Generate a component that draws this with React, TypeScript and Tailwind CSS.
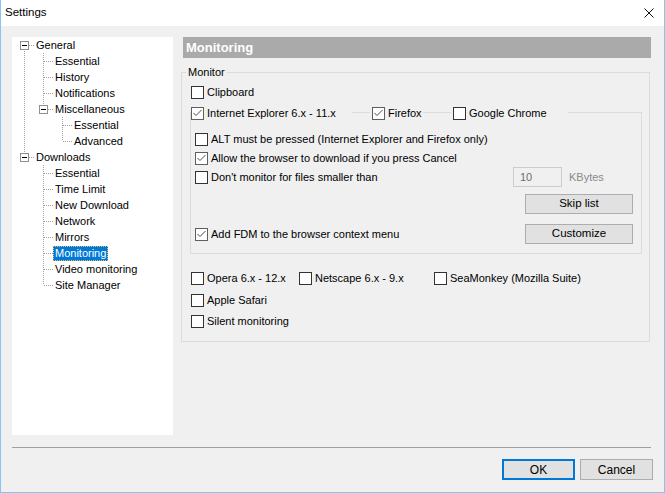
import React from "react";

type TreeNode = { label: string; children?: TreeNode[]; selected?: boolean };

const treeData: TreeNode[] = [
  {
    label: "General",
    children: [
      { label: "Essential" },
      { label: "History" },
      { label: "Notifications" },
      {
        label: "Miscellaneous",
        children: [{ label: "Essential" }, { label: "Advanced" }],
      },
    ],
  },
  {
    label: "Downloads",
    children: [
      { label: "Essential" },
      { label: "Time Limit" },
      { label: "New Download" },
      { label: "Network" },
      { label: "Mirrors" },
      { label: "Monitoring", selected: true },
      { label: "Video monitoring" },
      { label: "Site Manager" },
    ],
  },
];

type FlatRow = {
  label: string;
  guides: boolean[];
  top: boolean;
  bottom: boolean;
  expander: boolean;
  selected?: boolean;
};

const flatten = (nodes: TreeNode[], guides: boolean[], isRoot: boolean): FlatRow[] => {
  const rows: FlatRow[] = [];
  nodes.forEach((node, idx) => {
    const isLast = idx === nodes.length - 1;
    rows.push({
      label: node.label,
      guides,
      top: !(isRoot && idx === 0),
      bottom: !isLast,
      expander: !!node.children,
      selected: node.selected,
    });
    if (node.children) {
      rows.push(...flatten(node.children, [...guides, !isLast], false));
    }
  });
  return rows;
};

const DOT = "#a0a0a0";

// one 19px column of the tree: vertical guide and/or connector
const TreeCell = ({
  top,
  bottom,
  connector,
  expander,
}: {
  top: boolean;
  bottom: boolean;
  connector: boolean;
  expander: boolean;
}) => (
  <svg width="19" height="16" viewBox="0 0 19 16" className="shrink-0">
    {top && <line x1="9.5" y1="0" x2="9.5" y2="8" stroke={DOT} strokeDasharray="1 1" />}
    {bottom && <line x1="9.5" y1="8" x2="9.5" y2="16" stroke={DOT} strokeDasharray="1 1" />}
    {connector && <line x1="10" y1="8.5" x2="19" y2="8.5" stroke={DOT} strokeDasharray="1 1" />}
    {expander && (
      <>
        <rect x="5.5" y="4.5" width="8" height="8" fill="#fff" stroke="#919191" />
        <line x1="7" y1="8.5" x2="12" y2="8.5" stroke="#000" />
      </>
    )}
  </svg>
);

const TreeView = () => {
  const rows = flatten(treeData, [], true);
  return (
    <div className="w-[161px] h-[398px] bg-white pl-[3px] text-[11px] text-black">
      {rows.map((row, i) => (
        <div key={i} className="flex h-4 items-center">
          {row.guides.map((g, j) => (
            <TreeCell key={j} top={g} bottom={g} connector={false} expander={false} />
          ))}
          <TreeCell top={row.top} bottom={row.bottom} connector expander={row.expander} />
          <span
            className={
              row.selected
                ? "px-[1px] h-[15px] leading-[13px] bg-[#0078d7] text-white border border-dotted border-[#e0c060]"
                : "px-[2px] leading-[15px]"
            }
          >
            {row.label}
          </span>
        </div>
      ))}
    </div>
  );
};

const CheckBox = ({ checked }: { checked?: boolean }) => (
  <span
    className={`w-[13px] h-[13px] shrink-0 bg-white border flex items-center justify-center ${
      checked ? "border-[#5f5f5f]" : "border-[#333333]"
    }`}
  >
    {checked && (
      <svg width="11" height="11" viewBox="0 0 11 11">
        <path d="M1.5 5 L4 7.5 L9.5 2" fill="none" stroke="#4a4a4a" strokeWidth="1" />
      </svg>
    )}
  </span>
);

const CheckRow = ({
  label,
  checked,
  className = "",
}: {
  label: string;
  checked?: boolean;
  className?: string;
}) => (
  <label className={`flex items-center h-4 ${className}`}>
    <CheckBox checked={checked} />
    <span className="ml-[3px] whitespace-nowrap">{label}</span>
  </label>
);

const WinButton = ({ label, focused }: { label: string; focused?: boolean }) => (
  <button
    type="button"
    className={`w-full h-full flex items-center justify-center bg-[#e1e1e1] text-black ${
      focused ? "border-2 border-[#0078d7]" : "border border-[#adadad]"
    }`}
  >
    {label}
  </button>
);

const App = () => {
  return (
    <div className="w-[665px] h-[493px] flex flex-col bg-[#f0f0f0] border-x border-b border-[#88c4f4] font-['Liberation_Sans',Arial,sans-serif] text-black overflow-hidden">
      {/* title bar */}
      <div className="h-[26px] shrink-0 bg-white flex items-center justify-between pl-[4px] pr-[10px]">
        <span className="text-[11.5px]">Settings</span>
        <svg width="10" height="10" viewBox="0 0 10 10">
          <path d="M0.5 0.5 L9.5 9.5 M9.5 0.5 L0.5 9.5" stroke="#111" strokeWidth="1" />
        </svg>
      </div>

      <div className="flex pt-[11px] pl-[11px] gap-[8px]">
        <TreeView />

        <div className="w-[470px] flex flex-col text-[11px]">
          <div className="h-[21px] ml-[2px] bg-[#aaaaaa] text-white font-bold text-[13px] pl-[3px] flex items-center">
            Monitoring
          </div>

          <div className="mt-[14px] w-[469px] border border-[#dcdcdc] pl-[9px] pb-[12px] flex flex-col">
            <span className="-mt-[8px] -ml-[5px] px-[2px] h-[14px] leading-[14px] w-fit bg-[#f0f0f0]">
              Monitor
            </span>
            <CheckRow label="Clipboard" className="mt-[5px]" />

            <div className="mt-[12px] -ml-[1px] w-[452px] border border-[#dcdcdc] pl-[4px] pr-[8px] pb-[9px] flex flex-col">
              <div className="-mt-[8px] -ml-[4px] flex h-4">
                <div className="w-[161px] bg-[#f0f0f0] flex items-center">
                  <CheckRow label="Internet Explorer 6.x - 11.x" checked />
                </div>
                <div className="w-[18px]" />
                <div className="w-[53px] pl-[2px] bg-[#f0f0f0] flex items-center">
                  <CheckRow label="Firefox" checked />
                </div>
                <div className="w-[28px]" />
                <div className="w-[117px] pl-[2px] bg-[#f0f0f0] flex items-center">
                  <CheckRow label="Google Chrome" />
                </div>
              </div>

              <CheckRow
                label="ALT must be pressed (Internet Explorer and Firefox only)"
                className="mt-[10px]"
              />
              <CheckRow
                label="Allow the browser to download if you press Cancel"
                checked
                className="mt-[3px]"
              />
              <div className="mt-[1px] h-[20px] flex items-center">
                <CheckRow label="Don't monitor for files smaller than" />
                <div className="ml-auto w-[120px] flex items-center">
                  <div className="w-[49px] h-[20px] border border-[#cccccc] pl-[6px] flex items-center text-[#6d6d6d]">
                    10
                  </div>
                  <span className="ml-[7px] text-[#8a8a8a]">KBytes</span>
                </div>
              </div>
              <div className="mt-[7px] flex justify-end">
                <div className="w-[108px] h-[20px] flex text-[11.5px]">
                  <WinButton label="Skip list" />
                </div>
              </div>
              <div className="mt-[10px] h-[20px] flex items-center">
                <CheckRow label="Add FDM to the browser context menu" checked />
                <div className="ml-auto w-[108px] h-[20px] flex text-[11.5px]">
                  <WinButton label="Customize" />
                </div>
              </div>
            </div>

            <div className="mt-[16px] flex">
              <div className="w-[108px]">
                <CheckRow label="Opera 6.x - 12.x" />
              </div>
              <div className="w-[135px]">
                <CheckRow label="Netscape 6.x - 9.x" />
              </div>
              <CheckRow label="SeaMonkey (Mozilla Suite)" />
            </div>
            <CheckRow label="Apple Safari" className="mt-[6px]" />
            <CheckRow label="Silent monitoring" className="mt-[5px]" />
          </div>
        </div>
      </div>

      <div className="mt-[12px] ml-[11px] w-[639px] h-[1px] bg-[#a0a0a0]" />

      <div className="mt-[11px] flex justify-end gap-[5px] pr-[11px] text-[12px]">
        <div className="w-[73px] h-[21px] flex">
          <WinButton label="OK" focused />
        </div>
        <div className="w-[73px] h-[21px] flex">
          <WinButton label="Cancel" />
        </div>
      </div>
    </div>
  );
};

export default App;
